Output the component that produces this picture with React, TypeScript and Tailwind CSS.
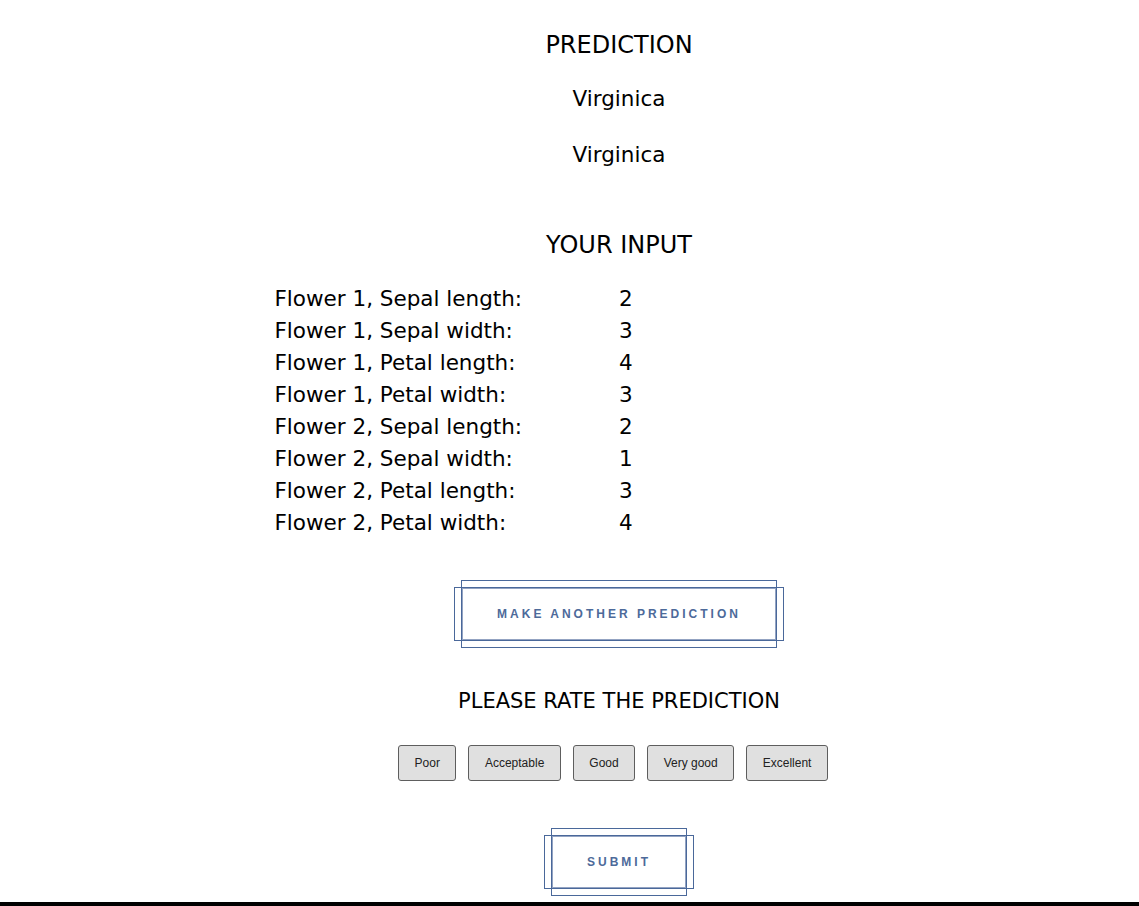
import React, { useState } from 'react';

const rows = [
  ['Flower 1, Sepal length:', '2'],
  ['Flower 1, Sepal width:', '3'],
  ['Flower 1, Petal length:', '4'],
  ['Flower 1, Petal width:', '3'],
  ['Flower 2, Sepal length:', '2'],
  ['Flower 2, Sepal width:', '1'],
  ['Flower 2, Petal length:', '3'],
  ['Flower 2, Petal width:', '4'],
];

const ratings = ['Poor', 'Acceptable', 'Good', 'Very good', 'Excellent'];

const FramedButton: React.FC<{ label: string; width: string }> = ({ label, width }) => (
  <button
    className={`relative h-[54px] ${width} flex items-center justify-center border-2 border-[#93a3c2] bg-white text-[12px] font-bold tracking-[3px] text-[#4d6a9a] font-['Liberation_Sans',Arial,sans-serif]`}
  >
    <span className="pointer-events-none absolute -left-[2px] -right-[2px] -top-[9px] -bottom-[9px] border border-[#4a689a]" />
    <span className="pointer-events-none absolute -left-[9px] -right-[9px] -top-[2px] -bottom-[2px] border border-[#4a689a]" />
    {label}
  </button>
);

export default function App() {
  const [rating, setRating] = useState<string | null>(null);

  return (
    <div className="min-h-[906px] bg-white text-black font-['DejaVu_Sans',Verdana,sans-serif]">
      <div className="ml-[99px] flex flex-col items-center pt-[31px]">
        <h1 className="text-[24px] leading-[28px] font-normal">PREDICTION</h1>
        <p className="mt-[28px] text-[21.5px] leading-[24px]">Virginica</p>
        <p className="mt-[32px] text-[21.5px] leading-[24px]">Virginica</p>

        <h2 className="mt-[64px] text-[24px] leading-[28px] font-normal">YOUR INPUT</h2>
        <div className="mt-[24px] grid w-[689px] grid-cols-2 text-[21.5px]">
          {rows.map(([label, value]) => (
            <React.Fragment key={label}>
              <div className="h-[32px] leading-[32px]">{label}</div>
              <div className="h-[32px] leading-[32px]">{value}</div>
            </React.Fragment>
          ))}
        </div>

        <div className="mt-[48px]">
          <FramedButton label="MAKE ANOTHER PREDICTION" width="w-[316px]" />
        </div>

        <h2 className="mt-[48px] text-[21px] leading-[24px] font-normal">PLEASE RATE THE PREDICTION</h2>
        <div className="mt-[32px] flex">
          {ratings.map((r) => (
            <button
              key={r}
              onClick={() => setRating(r)}
              className={`mr-3 h-[36px] rounded-[3px] border border-[#5e5e5e] px-[15.5px] text-[12px] text-[#222] font-['Liberation_Sans',Arial,sans-serif] ${
                rating === r ? 'bg-[#c8c8c8]' : 'bg-[#e0e0e0]'
              }`}
            >
              {r}
            </button>
          ))}
        </div>

        <div className="mt-[54px]">
          <FramedButton label="SUBMIT" width="w-[136px]" />
        </div>
      </div>
      <div className="mt-[13px] h-[4px] w-full bg-black" />
    </div>
  );
}
